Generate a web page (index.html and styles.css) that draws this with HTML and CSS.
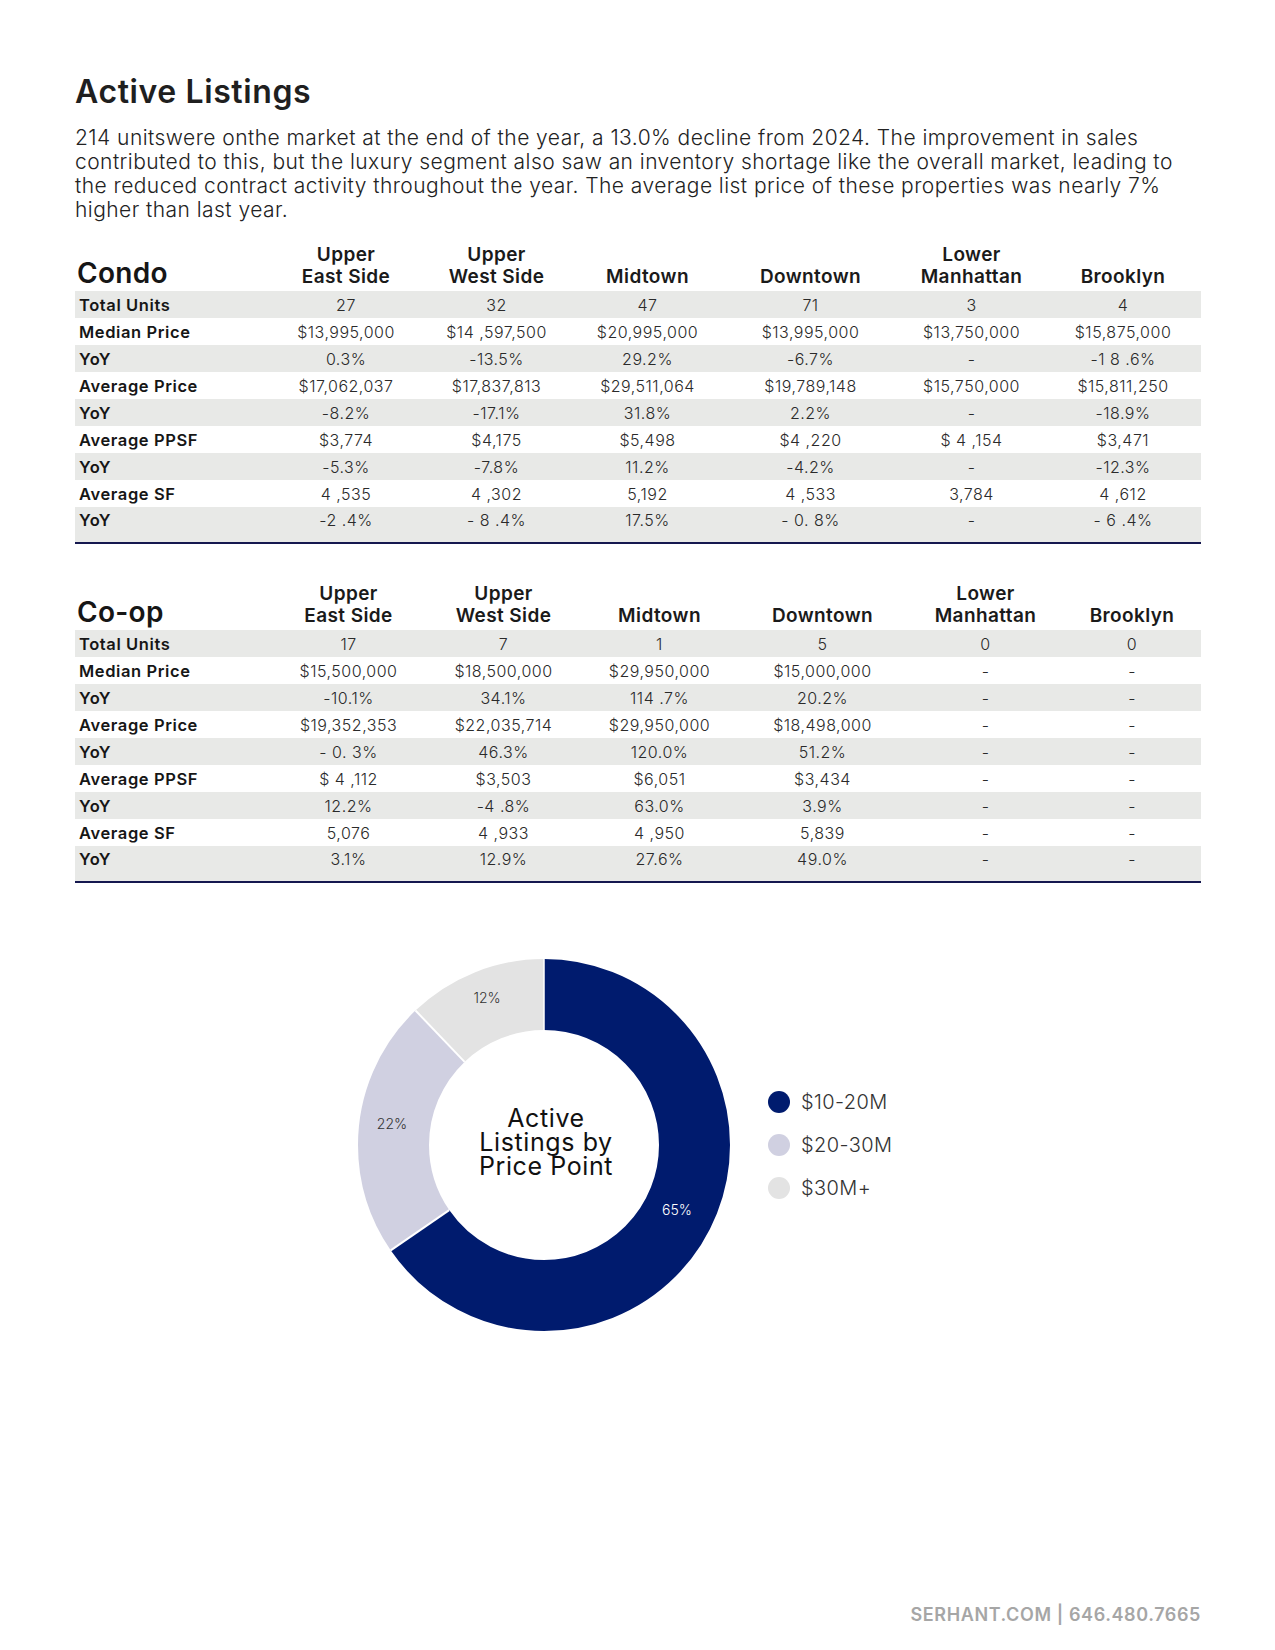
FILE: index.html
```html
<!DOCTYPE html>
<html lang="en">
<head>
<meta charset="utf-8">
<title>Active Listings</title>
<link rel="stylesheet" href="styles.css">
</head>
<body>
<div class="page">
  <h1 class="title">Active Listings</h1>
  <p class="intro">214 unitswere onthe market at the end of the year, a 13.0% decline from 2024. The improvement in sales<br>contributed to this, but the luxury segment also saw an inventory shortage like the overall market, leading to<br>the reduced contract activity throughout the year. The average list price of these properties was nearly 7%<br>higher than last year.</p>

  <div class="tbl condo">
    <div class="row head">
      <div class="cell lbl">Condo</div>
      <div class="cell">Upper<br>East Side</div>
      <div class="cell">Upper<br>West Side</div>
      <div class="cell">Midtown</div>
      <div class="cell">Downtown</div>
      <div class="cell">Lower<br>Manhattan</div>
      <div class="cell">Brooklyn</div>
    </div>
    <div class="row shade"><div class="cell lbl">Total Units</div><div class="cell">27</div><div class="cell">32</div><div class="cell">47</div><div class="cell">71</div><div class="cell">3</div><div class="cell">4</div></div>
    <div class="row"><div class="cell lbl">Median Price</div><div class="cell">$13,995,000</div><div class="cell">$14 ,597,500</div><div class="cell">$20,995,000</div><div class="cell">$13,995,000</div><div class="cell">$13,750,000</div><div class="cell">$15,875,000</div></div>
    <div class="row shade"><div class="cell lbl">YoY</div><div class="cell">0.3%</div><div class="cell">-13.5%</div><div class="cell">29.2%</div><div class="cell">-6.7%</div><div class="cell">-</div><div class="cell">-1 8 .6%</div></div>
    <div class="row"><div class="cell lbl">Average Price</div><div class="cell">$17,062,037</div><div class="cell">$17,837,813</div><div class="cell">$29,511,064</div><div class="cell">$19,789,148</div><div class="cell">$15,750,000</div><div class="cell">$15,811,250</div></div>
    <div class="row shade"><div class="cell lbl">YoY</div><div class="cell">-8.2%</div><div class="cell">-17.1%</div><div class="cell">31.8%</div><div class="cell">2.2%</div><div class="cell">-</div><div class="cell">-18.9%</div></div>
    <div class="row"><div class="cell lbl">Average PPSF</div><div class="cell">$3,774</div><div class="cell">$4,175</div><div class="cell">$5,498</div><div class="cell">$4 ,220</div><div class="cell">$ 4 ,154</div><div class="cell">$3,471</div></div>
    <div class="row shade"><div class="cell lbl">YoY</div><div class="cell">-5.3%</div><div class="cell">-7.8%</div><div class="cell">11.2%</div><div class="cell">-4.2%</div><div class="cell">-</div><div class="cell">-12.3%</div></div>
    <div class="row"><div class="cell lbl">Average SF</div><div class="cell">4 ,535</div><div class="cell">4 ,302</div><div class="cell">5,192</div><div class="cell">4 ,533</div><div class="cell">3,784</div><div class="cell">4 ,612</div></div>
    <div class="row shade last"><div class="cell lbl">YoY</div><div class="cell">-2 .4%</div><div class="cell">- 8 .4%</div><div class="cell">17.5%</div><div class="cell">- 0. 8%</div><div class="cell">-</div><div class="cell">- 6 .4%</div></div>
  </div>

  <div class="tbl coop">
    <div class="row head">
      <div class="cell lbl">Co-op</div>
      <div class="cell">Upper<br>East Side</div>
      <div class="cell">Upper<br>West Side</div>
      <div class="cell">Midtown</div>
      <div class="cell">Downtown</div>
      <div class="cell">Lower<br>Manhattan</div>
      <div class="cell">Brooklyn</div>
    </div>
    <div class="row shade"><div class="cell lbl">Total Units</div><div class="cell">17</div><div class="cell">7</div><div class="cell">1</div><div class="cell">5</div><div class="cell">0</div><div class="cell">0</div></div>
    <div class="row"><div class="cell lbl">Median Price</div><div class="cell">$15,500,000</div><div class="cell">$18,500,000</div><div class="cell">$29,950,000</div><div class="cell">$15,000,000</div><div class="cell">-</div><div class="cell">-</div></div>
    <div class="row shade"><div class="cell lbl">YoY</div><div class="cell">-10.1%</div><div class="cell">34.1%</div><div class="cell">114 .7%</div><div class="cell">20.2%</div><div class="cell">-</div><div class="cell">-</div></div>
    <div class="row"><div class="cell lbl">Average Price</div><div class="cell">$19,352,353</div><div class="cell">$22,035,714</div><div class="cell">$29,950,000</div><div class="cell">$18,498,000</div><div class="cell">-</div><div class="cell">-</div></div>
    <div class="row shade"><div class="cell lbl">YoY</div><div class="cell">- 0. 3%</div><div class="cell">46.3%</div><div class="cell">120.0%</div><div class="cell">51.2%</div><div class="cell">-</div><div class="cell">-</div></div>
    <div class="row"><div class="cell lbl">Average PPSF</div><div class="cell">$ 4 ,112</div><div class="cell">$3,503</div><div class="cell">$6,051</div><div class="cell">$3,434</div><div class="cell">-</div><div class="cell">-</div></div>
    <div class="row shade"><div class="cell lbl">YoY</div><div class="cell">12.2%</div><div class="cell">-4 .8%</div><div class="cell">63.0%</div><div class="cell">3.9%</div><div class="cell">-</div><div class="cell">-</div></div>
    <div class="row"><div class="cell lbl">Average SF</div><div class="cell">5,076</div><div class="cell">4 ,933</div><div class="cell">4 ,950</div><div class="cell">5,839</div><div class="cell">-</div><div class="cell">-</div></div>
    <div class="row shade last"><div class="cell lbl">YoY</div><div class="cell">3.1%</div><div class="cell">12.9%</div><div class="cell">27.6%</div><div class="cell">49.0%</div><div class="cell">-</div><div class="cell">-</div></div>
  </div>

  <div class="chart">
    <svg class="donut" width="372" height="372" viewBox="0 0 372 372">
      <g transform="rotate(-90 186 186)">
        <circle cx="186" cy="186" r="150.5" fill="none" stroke="#001b6e" stroke-width="71" pathLength="214" stroke-dasharray="140 74" stroke-dashoffset="0"/>
        <circle cx="186" cy="186" r="150.5" fill="none" stroke="#d0d0e1" stroke-width="71" pathLength="214" stroke-dasharray="48 166" stroke-dashoffset="-140"/>
        <circle cx="186" cy="186" r="150.5" fill="none" stroke="#e3e3e3" stroke-width="71" pathLength="214" stroke-dasharray="26 188" stroke-dashoffset="-188"/>
      </g>
      <line x1="186" y1="71" x2="186" y2="0" stroke="#fff" stroke-width="1.5"/>
      <line x1="91.2" y1="251.1" x2="32.7" y2="291.4" stroke="#fff" stroke-width="2"/>
      <line x1="106.6" y1="102.9" x2="57.5" y2="51.5" stroke="#fff" stroke-width="2"/>
      <text class="pct" x="129" y="44" text-anchor="middle">12%</text>
      <text class="pct" x="34" y="170" text-anchor="middle">22%</text>
      <text class="pct light" x="319" y="256" text-anchor="middle">65%</text>
      <text class="center" x="188" y="168" text-anchor="middle">Active</text>
      <text class="center" x="188" y="192" text-anchor="middle">Listings by</text>
      <text class="center" x="188" y="216" text-anchor="middle">Price Point</text>
    </svg>
    <ul class="legend">
      <li><span class="dot navy"></span>$10-20M</li>
      <li><span class="dot lav"></span>$20-30M</li>
      <li><span class="dot grey"></span>$30M+</li>
    </ul>
  </div>

  <div class="footer">SERHANT.COM | 646.480.7665</div>
</div>
</body>
</html>
```

FILE: styles.css
```css
* { box-sizing: border-box; }
html, body { margin: 0; padding: 0; background: #fff; }
body {
  font-family: Inter, "Noto Sans", "DejaVu Sans", sans-serif;
  color: #1d1d1d;
}
.page {
  width: 1275px;
  min-height: 1650px;
  padding: 74px 74px 25px 75px;
  display: flex;
  flex-direction: column;
}
.title {
  margin: 0;
  font-size: 32px;
  line-height: 36px;
  font-weight: 600;
  letter-spacing: 0.6px;
  color: #1f1f1f;
}
.intro {
  margin: 16px 0 0 0;
  font-size: 21px;
  line-height: 24px;
  font-weight: 300;
  letter-spacing: 0.45px;
  color: #222;
  white-space: nowrap;
}
.tbl { margin-top: 22px; }
.tbl.coop { margin-top: 39px; }
.row {
  display: grid;
  height: 27px;
  align-items: center;
}
.condo .row { grid-template-columns: 196px 150px 151px 151px 175px 147px 156px; }
.coop .row { grid-template-columns: 196px 155px 155px 157px 169px 157px 136px; }
.row.shade { background: #e8e9e7; }
.row.last {
  height: 37px;
  padding-bottom: 10px;
  border-bottom: 2px solid #15184f;
}
.cell {
  text-align: center;
  font-size: 16px;
  font-weight: 300;
  letter-spacing: 0.5px;
  color: #2a2a2a;
  white-space: nowrap;
}
.cell.lbl {
  text-align: left;
  padding-left: 4px;
  font-size: 16.5px;
  font-weight: 600;
  letter-spacing: 0.6px;
  color: #161616;
}
.row.head {
  height: auto;
  align-items: end;
  padding-bottom: 3px;
}
.row.head .cell {
  font-size: 19px;
  line-height: 22px;
  font-weight: 600;
  letter-spacing: 0.4px;
  color: #1a1a1a;
}
.row.head .cell.lbl {
  font-size: 28px;
  line-height: 30px;
  padding-left: 2px;
  font-weight: 600;
  letter-spacing: 0.3px;
  color: #161616;
}
.chart {
  display: flex;
  align-items: center;
  margin-top: 76px;
  margin-left: 283px;
}
.donut { display: block; flex: none; }
.pct {
  font-family: Inter, "Noto Sans", sans-serif;
  font-size: 14px;
  font-weight: 300;
  fill: #333;
}
.pct.light { fill: #fff; }
.center {
  font-family: Inter, "Noto Sans", sans-serif;
  font-size: 25px;
  font-weight: 400;
  letter-spacing: 0.6px;
  fill: #111;
}
.legend {
  list-style: none;
  margin: 0 0 0 38px;
  padding: 0;
  display: flex;
  flex-direction: column;
  gap: 21px;
}
.legend li {
  display: flex;
  align-items: center;
  gap: 11px;
  height: 22px;
  font-size: 20px;
  font-weight: 300;
  letter-spacing: 0.4px;
  color: #333;
}
.dot {
  width: 22px;
  height: 22px;
  border-radius: 50%;
  flex: none;
}
.dot.navy { background: #001b6e; }
.dot.lav { background: #d0d0e1; }
.dot.grey { background: #e3e3e3; }
.footer {
  margin-top: auto;
  align-self: flex-end;
  font-size: 18px;
  line-height: 20px;
  font-weight: 600;
  color: #a6a6a6;
  letter-spacing: 0.6px;
}
```
